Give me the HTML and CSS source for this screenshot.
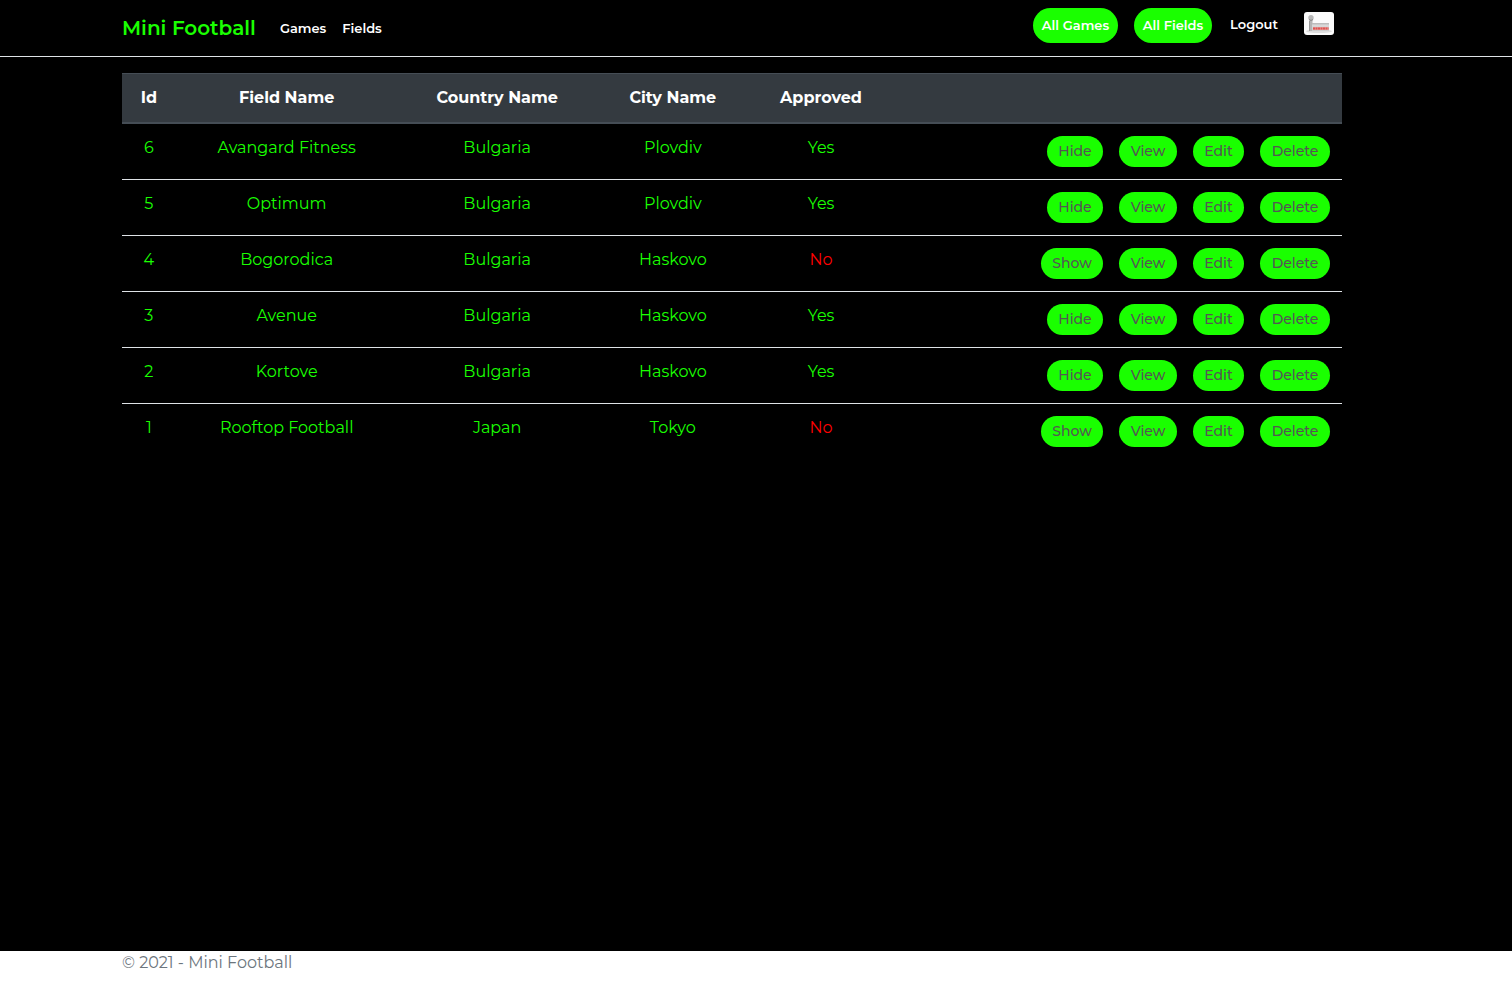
FILE: index.html
```html
<!DOCTYPE html>
<html lang="en">
<head>
<meta charset="utf-8">
<meta name="viewport" content="width=device-width, initial-scale=1">
<title>Mini Football</title>
<link rel="stylesheet" href="styles.css">
</head>
<body>
<header class="navbar">
  <a class="brand" href="#">Mini Football</a>
  <nav class="nav-main"><a href="#">Games</a><a href="#">Fields</a></nav>
  <nav class="nav-user">
    <a class="nav-pill" href="#">All Games</a>
    <a class="nav-pill nav-pill-fields" href="#">All Fields</a>
    <button class="logout" type="button">Logout</button>
    <a class="avatar" href="#" aria-label="Manager profile">
      <svg viewBox="0 0 30 23" width="30" height="23" aria-hidden="true">
        <defs><linearGradient id="panel" x1="0" y1="0" x2="0" y2="1"><stop offset="0" stop-color="#b5b5b5"/><stop offset=".3" stop-color="#d9d9d9"/><stop offset="1" stop-color="#cccccc"/></linearGradient></defs>
        <rect width="30" height="23" fill="#fbfbfb"/>
        <ellipse cx="15" cy="19.3" rx="13" ry="1.8" fill="#dedede"/>
        <rect x="8" y="11" width="17" height="8" fill="url(#panel)"/>
        <path d="M5.5 8h3v3h-.5v8H5.5z" fill="#b5b5b5"/>
        <path d="M5.5 9v10" stroke="#9a9a9a"/>
        <circle cx="7" cy="5.8" r="2.7" fill="#b8b8b8"/>
        <path d="M5 7.6q2 1.6 4 0" stroke="#858585" fill="none"/>
        <path d="M9 16.5h15.500" stroke="#e7a09d" stroke-width="3"/>
        <path d="M9 16.500h15.500" stroke="#dc5552" stroke-width="2" stroke-dasharray="2 .5"/>
      </svg>
    </a>
  </nav>
</header>
<main class="content">
  <table class="fields">
    <colgroup><col class="col-id"><col class="col-name"><col class="col-country"><col class="col-city"><col class="col-approved"><col></colgroup>
    <thead><tr><th>Id</th><th>Field Name</th><th>Country Name</th><th>City Name</th><th>Approved</th><th></th></tr></thead>
    <tbody>
      <tr><td>6</td><td>Avangard Fitness</td><td>Bulgaria</td><td>Plovdiv</td><td>Yes</td><td><div class="actions"><button class="btn hide">Hide</button><a class="btn view" href="#">View</a><a class="btn edit" href="#">Edit</a><button class="btn delete">Delete</button></div></td></tr>
      <tr><td>5</td><td>Optimum</td><td>Bulgaria</td><td>Plovdiv</td><td>Yes</td><td><div class="actions"><button class="btn hide">Hide</button><a class="btn view" href="#">View</a><a class="btn edit" href="#">Edit</a><button class="btn delete">Delete</button></div></td></tr>
      <tr><td>4</td><td>Bogorodica</td><td>Bulgaria</td><td>Haskovo</td><td class="no">No</td><td><div class="actions"><button class="btn show">Show</button><a class="btn view" href="#">View</a><a class="btn edit" href="#">Edit</a><button class="btn delete">Delete</button></div></td></tr>
      <tr><td>3</td><td>Avenue</td><td>Bulgaria</td><td>Haskovo</td><td>Yes</td><td><div class="actions"><button class="btn hide">Hide</button><a class="btn view" href="#">View</a><a class="btn edit" href="#">Edit</a><button class="btn delete">Delete</button></div></td></tr>
      <tr><td>2</td><td>Kortove</td><td>Bulgaria</td><td>Haskovo</td><td>Yes</td><td><div class="actions"><button class="btn hide">Hide</button><a class="btn view" href="#">View</a><a class="btn edit" href="#">Edit</a><button class="btn delete">Delete</button></div></td></tr>
      <tr><td>1</td><td>Rooftop Football</td><td>Japan</td><td>Tokyo</td><td class="no">No</td><td><div class="actions"><button class="btn show">Show</button><a class="btn view" href="#">View</a><a class="btn edit" href="#">Edit</a><button class="btn delete">Delete</button></div></td></tr>
    </tbody>
  </table>
</main>
<footer class="footer">© 2021 - Mini Football</footer>
</body>
</html>
```

FILE: styles.css
```css
* { box-sizing: border-box; }

body {
  margin: 0;
  min-height: 100vh;
  display: flex;
  flex-direction: column;
  background: #000;
  color: #1aff00;
  font: 400 16px/24px Montserrat, Inter, sans-serif;
}

a { color: inherit; text-decoration: none; }
button { border: 0; background: none; font: inherit; color: inherit; cursor: pointer; }

.navbar, .content, .footer { padding-left: 122px; padding-right: 170px; }

.navbar {
  display: flex;
  align-items: flex-start;
  padding-top: 8px;
  padding-bottom: 8px;
  border-bottom: 1px solid #dee2e6;
  color: #fff;
  font-size: 13px;
  font-weight: 600;
}

.brand { color: #1aff00; font-size: 20px; line-height: 40px; margin-right: 24px; white-space: nowrap; }
.nav-main { display: flex; gap: 16px; line-height: 40px; }
.nav-user { display: flex; margin-left: auto; padding-right: 8px; line-height: 33px; white-space: nowrap; }
.nav-pill {
  min-width: 85px;
  height: 35px;
  margin-right: 16px;
  border-radius: 18px;
  background: #1aff00;
  line-height: 35px;
  text-align: center;
}
.nav-pill-fields { min-width: 78px; }
.logout { padding: 0; width: 52px; height: 33px; margin-right: 24px; text-align: center; }
.avatar { margin-top: 4px; height: 23px; border-radius: 3px; overflow: hidden; }
.avatar svg { display: block; }

.content { flex: 1; padding-top: 16px; padding-bottom: 16px; }
.fields { width: 100%; table-layout: fixed; border-collapse: separate; border-spacing: 0; text-align: center; }
.col-id { width: 4.4%; }
.col-name { width: 18.2%; }
.col-country { width: 16.3%; }
.col-city { width: 12.5%; }
.col-approved { width: 11.8%; }

.fields th {
  padding: 12px;
  height: 51px;
  border-top: 1px solid #454d55;
  border-bottom: 2px solid #454d55;
  background: #343a40;
  color: #fff;
  font-weight: 700;
  white-space: nowrap;
}
.fields td { padding: 12px; border-bottom: 1px solid #dee2e6; vertical-align: top; white-space: nowrap; }
.fields tr:last-child td { border-bottom-color: transparent; }
.fields .no { color: #f00; }

.actions { display: flex; justify-content: flex-end; gap: 16px; }
.btn {
  height: 31px;
  padding: 0;
  border-radius: 16px;
  background: #1aff00;
  color: #555;
  font-size: 14px;
  font-weight: 500;
  line-height: 31px;
  text-align: center;
}
.hide { width: 56px; }
.show { width: 62px; }
.view { width: 58px; }
.edit { width: 51px; }
.delete { width: 70px; }

.footer { min-height: 30px; background: #fff; color: #6c757d; }
```
